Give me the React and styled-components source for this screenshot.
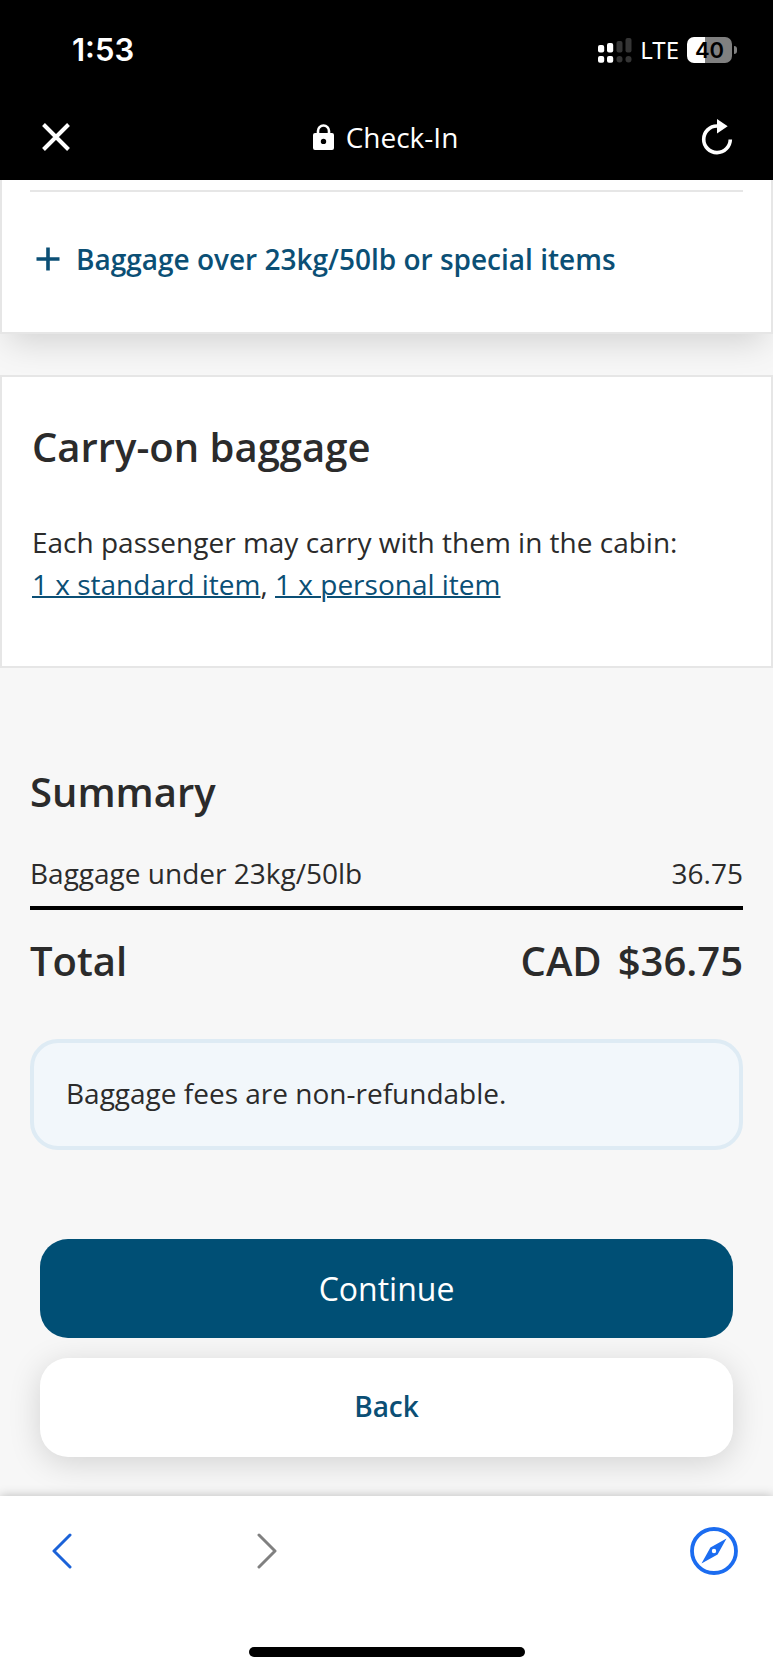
import React, { useState } from "react";
import styled, { createGlobalStyle } from "styled-components";

const GlobalStyle = createGlobalStyle`
  * {
    box-sizing: border-box;
  }
  body {
    margin: 0;
    background: #f7f7f7;
    color: #2b2b2b;
    font-family: "Open Sans", "Noto Sans", sans-serif;
    font-size: 28px;
    line-height: 42px;
  }
  h1, h2, p, dl, dt, dd {
    margin: 0;
  }
  button {
    font: inherit;
    border: none;
    padding: 0;
    background: none;
    cursor: pointer;
  }
`;

const SignalIcon = () => (
  <svg width="34" height="26" viewBox="0 0 34 26">
    <g fill="#fff">
      <rect x="0" y="8" width="6.200" height="7.500" rx="2" />
      <rect x="9" y="6" width="6.200" height="9.500" rx="2" />
      <rect x="0" y="19" width="6.200" height="6.800" rx="2" />
      <rect x="9" y="19" width="6.200" height="6.800" rx="2" />
    </g>
    <g fill="#353535">
      <rect x="18.500" y="4" width="6" height="11.500" rx="2" />
      <rect x="27.500" y="1" width="6" height="14.500" rx="2" />
      <rect x="18.500" y="19" width="6" height="6.500" rx="3" />
      <rect x="27.500" y="19" width="6" height="6.500" rx="3" />
    </g>
  </svg>
);

const CloseIcon = () => (
  <svg width="28" height="28" viewBox="0 0 28 28">
    <path d="M1.500 1.500L26.500 26.500M26.500 1.500L1.500 26.500" stroke="#fff" strokeWidth="4" />
  </svg>
);

const LockIcon = () => (
  <svg width="21" height="26" viewBox="0 0 21 26">
    <path d="M5 10V7a5.500 5.500 0 0 1 11 0V10" fill="none" stroke="#fff" strokeWidth="2.600" />
    <path
      d="M2 9h17a2 2 0 0 1 2 2v13a2 2 0 0 1-2 2h-17A2 2 0 0 1 0 24v-13A2 2 0 0 1 2 9zm8.500 5.700a2.700 2.700 0 1 0 0 5.400 2.700 2.700 0 0 0 0-5.400z"
      fill="#fff"
      fillRule="evenodd"
    />
  </svg>
);

const ReloadIcon = () => (
  <svg width="32" height="36" viewBox="0 0 32 36">
    <path d="M16 7A13.300 13.300 0 1 0 29.300 20.500" fill="none" stroke="#fff" strokeWidth="3.600" />
    <path d="M16 0L26.700 7.200L16 14.400z" fill="#fff" />
  </svg>
);

const PlusIcon = () => (
  <svg width="24" height="24" viewBox="0 0 24 24">
    <path d="M12 0.500V23.500M0.500 12H23.500" stroke="#0b4f75" strokeWidth="3.600" />
  </svg>
);

const ChevronIcon = ({ color, forward }) => (
  <svg width="20" height="36" viewBox="0 0 20 36">
    <path
      d={forward ? "M2 2L18 18L2 34" : "M18 2L2 18L18 34"}
      fill="none"
      stroke={color}
      strokeWidth="3"
      strokeLinecap="round"
      strokeLinejoin="round"
    />
  </svg>
);

const CompassIcon = () => (
  <svg width="48" height="48" viewBox="0 0 48 48">
    <circle cx="24" cy="24" r="22" fill="none" stroke="#1b6cf0" strokeWidth="3.800" />
    <path
      d="M36.500 11.500L27.600 27.600L11.500 36.500L20.400 20.400zM24 21.800a2.200 2.200 0 1 0 0 4.400 2.200 2.200 0 0 0 0-4.400z"
      fill="#1b6cf0"
      fillRule="evenodd"
    />
  </svg>
);

const App = () => {
  const [open, setOpen] = useState(false);

  return (
    <Page>
      <GlobalStyle />
      <Header>
        <StatusBar>
          <Clock>1:53</Clock>
          <StatusIcons>
            <SignalIcon />
            <Network>LTE</Network>
            <Battery>
              <BatteryBody>40</BatteryBody>
              <BatteryTip />
            </Battery>
          </StatusIcons>
        </StatusBar>
        <TitleBar>
          <button aria-label="Close">
            <CloseIcon />
          </button>
          <Title>
            <LockIcon />
            Check-In
          </Title>
          <button aria-label="Reload">
            <ReloadIcon />
          </button>
        </TitleBar>
      </Header>

      <Main>
        <SpecialCard>
          <Divider />
          <ExpandButton aria-expanded={open} onClick={() => setOpen(!open)}>
            <PlusIcon />
            Baggage over 23kg/50lb or special items
          </ExpandButton>
        </SpecialCard>

        <CarryOnCard>
          <Heading>Carry-on baggage</Heading>
          <p>
            Each passenger may carry with them in the cabin:
            <br />
            <TextLink href="#standard">1 x standard item</TextLink>,{" "}
            <TextLink href="#personal">1 x personal item</TextLink>
          </p>
        </CarryOnCard>

        <Summary>
          <Heading>Summary</Heading>
          <dl>
            <FeeRow>
              <dt>Baggage under 23kg/50lb</dt>
              <dd>36.75</dd>
            </FeeRow>
            <TotalRow>
              <dt>Total</dt>
              <Amount>
                <span>CAD</span>
                <span>$36.75</span>
              </Amount>
            </TotalRow>
          </dl>
          <Notice>Baggage fees are non-refundable.</Notice>
          <Actions>
            <ActionButton $primary>Continue</ActionButton>
            <ActionButton>Back</ActionButton>
          </Actions>
        </Summary>
      </Main>

      <BottomBar>
        <BrowserNav>
          <HistoryButtons>
            <button aria-label="Previous page">
              <ChevronIcon color="#1b62d8" />
            </button>
            <button aria-label="Next page">
              <ChevronIcon color="#808080" forward />
            </button>
          </HistoryButtons>
          <button aria-label="Open in browser">
            <CompassIcon />
          </button>
        </BrowserNav>
        <HomeIndicator />
      </BottomBar>
    </Page>
  );
};

const Page = styled.div`
  min-height: 100vh;
  display: flex;
  flex-direction: column;

  svg {
    display: block;
  }
`;

const Header = styled.header`
  background: #000;
  color: #fff;
`;

const StatusBar = styled.div`
  display: flex;
  align-items: center;
  justify-content: space-between;
  height: 100px;
  padding: 0 36px 0 72px;
`;

const Clock = styled.time`
  font-family: Inter, sans-serif;
  font-size: 31px;
  font-weight: 600;
`;

const StatusIcons = styled.div`
  display: flex;
  align-items: center;
  gap: 8px;
`;

const Network = styled.span`
  font-family: "Noto Sans", sans-serif;
  font-size: 24px;
  font-weight: 400;
`;

const Battery = styled.div`
  display: flex;
  align-items: center;
  gap: 2px;
`;

const BatteryBody = styled.div`
  width: 45px;
  height: 26px;
  border-radius: 7px;
  background: linear-gradient(to right, #fff 40%, #808080 40%);
  color: #000;
  font-family: Inter, sans-serif;
  font-size: 22px;
  font-weight: 600;
  line-height: 26px;
  text-align: center;
`;

const BatteryTip = styled.div`
  width: 3px;
  height: 8px;
  border-radius: 0 3px 3px 0;
  background: #808080;
`;

const TitleBar = styled.div`
  display: flex;
  align-items: center;
  justify-content: space-between;
  height: 80px;
  padding: 0 40px 6px 42px;
`;

const Title = styled.h1`
  display: flex;
  align-items: center;
  gap: 12px;
  font-size: 28px;
  font-weight: 400;
`;

const Main = styled.main`
  flex: 1;
`;

const Card = styled.section`
  background: #fff;
  border: 2px solid #e6e6e6;
`;

const SpecialCard = styled(Card)`
  border-top: none;
  padding: 10px 28px 52px;
  box-shadow: 0 16px 32px -8px rgba(0, 0, 0, 0.15);
`;

const Divider = styled.hr`
  margin: 0 0 46px;
  border: none;
  border-top: 2px solid #e6e6e6;
`;

const ExpandButton = styled.button`
  display: flex;
  align-items: center;
  gap: 16px;
  padding: 0 6px;
  color: #0b4f75;
  font-weight: 600;
  text-align: left;
`;

const CarryOnCard = styled(Card)`
  display: flex;
  flex-direction: column;
  gap: 47px;
  margin-top: 41px;
  padding: 43px 30px 61px;
`;

const Heading = styled.h2`
  font-size: 40px;
  font-weight: 600;
  line-height: 54px;
`;

const TextLink = styled.a`
  color: #0b4f75;
  text-decoration: underline;
  text-decoration-thickness: 2px;
`;

const Summary = styled.section`
  padding: 97px 30px 39px;
`;

const FeeRow = styled.div`
  display: flex;
  justify-content: space-between;
  margin-top: 33px;
  padding-bottom: 12px;
  border-bottom: 4px solid #000;
`;

const TotalRow = styled.div`
  display: flex;
  justify-content: space-between;
  margin-top: 24px;
  font-size: 40px;
  font-weight: 600;
  line-height: 54px;
`;

const Amount = styled.dd`
  display: flex;
  gap: 16px;
`;

const Notice = styled.p`
  margin-top: 51px;
  padding: 29px 32px 32px;
  border: 4px solid #deebf4;
  border-radius: 28px;
  background: #f2f7fb;
`;

const Actions = styled.div`
  display: flex;
  flex-direction: column;
  gap: 20px;
  margin-top: 89px;
  padding: 0 10px;
`;

const ActionButton = styled.button`
  height: 99px;
  padding-bottom: ${(props) => (props.$primary ? "0" : "4px")};
  border-radius: 28px;
  background: ${(props) => (props.$primary ? "#004f75" : "#fff")};
  color: ${(props) => (props.$primary ? "#fff" : "#0b4f75")};
  font-size: ${(props) => (props.$primary ? "32px" : "28px")};
  font-weight: ${(props) => (props.$primary ? 400 : 600)};
  box-shadow: ${(props) => (props.$primary ? "none" : "0 6px 32px rgba(0, 0, 0, 0.15)")};

  /* the lower button's shadow must not darken the primary one */
  position: relative;
  z-index: ${(props) => (props.$primary ? 1 : 0)};
`;

const BottomBar = styled.footer`
  position: relative;
  z-index: 2;
  display: flex;
  flex-direction: column;
  align-items: center;
  justify-content: space-between;
  height: 177px;
  padding: 31px 0 16px;
  background: #fff;
  box-shadow: 0 0 10px rgba(0, 0, 0, 0.25);
`;

const BrowserNav = styled.nav`
  display: flex;
  align-items: center;
  justify-content: space-between;
  width: 100%;
  padding: 0 35px 0 52px;
`;

const HistoryButtons = styled.div`
  display: flex;
  gap: 185px;
`;

const HomeIndicator = styled.div`
  width: 276px;
  height: 10px;
  border-radius: 5px;
  background: #000;
`;

export default App;
